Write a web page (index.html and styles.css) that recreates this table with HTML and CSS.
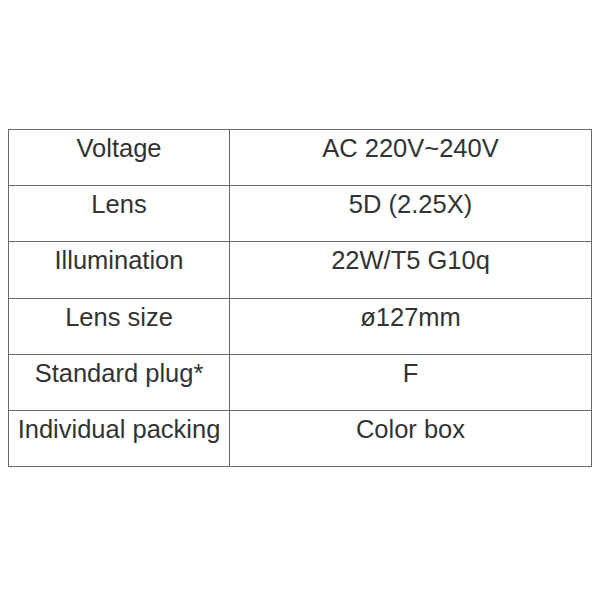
FILE: index.html
```html
<!DOCTYPE html>
<html>
<head>
<meta charset="utf-8">
<link rel="stylesheet" href="styles.css">
</head>
<body>
<table class="spec">
<tbody>
<tr><td class="k">Voltage</td><td class="v">AC 220V~240V</td></tr>
<tr><td class="k">Lens</td><td class="v">5D (2.25X)</td></tr>
<tr><td class="k">Illumination</td><td class="v">22W/T5 G10q</td></tr>
<tr><td class="k">Lens size</td><td class="v">ø127mm</td></tr>
<tr><td class="k">Standard plug*</td><td class="v">F</td></tr>
<tr><td class="k">Individual packing</td><td class="v">Color box</td></tr>
</tbody>
</table>
</body>
</html>
```
FILE: styles.css
```css
html, body {
  margin: 0;
  padding: 0;
  background: #ffffff;
}
body {
  padding: 129px 8px 0 8px;
  font-family: "Liberation Sans", Arial, sans-serif;
}
.spec {
  border-collapse: collapse;
  width: 584px;
  color: #333333;
  font-size: 25.5px;
  line-height: 28px;
}
.spec td {
  border: 1.5px solid #6a6a6a;
  text-align: center;
  vertical-align: top;
  padding: 4px 0 0 0;
  height: 56.2px;
  box-sizing: border-box;
}
.spec td.k {
  width: 221px;
}
```
